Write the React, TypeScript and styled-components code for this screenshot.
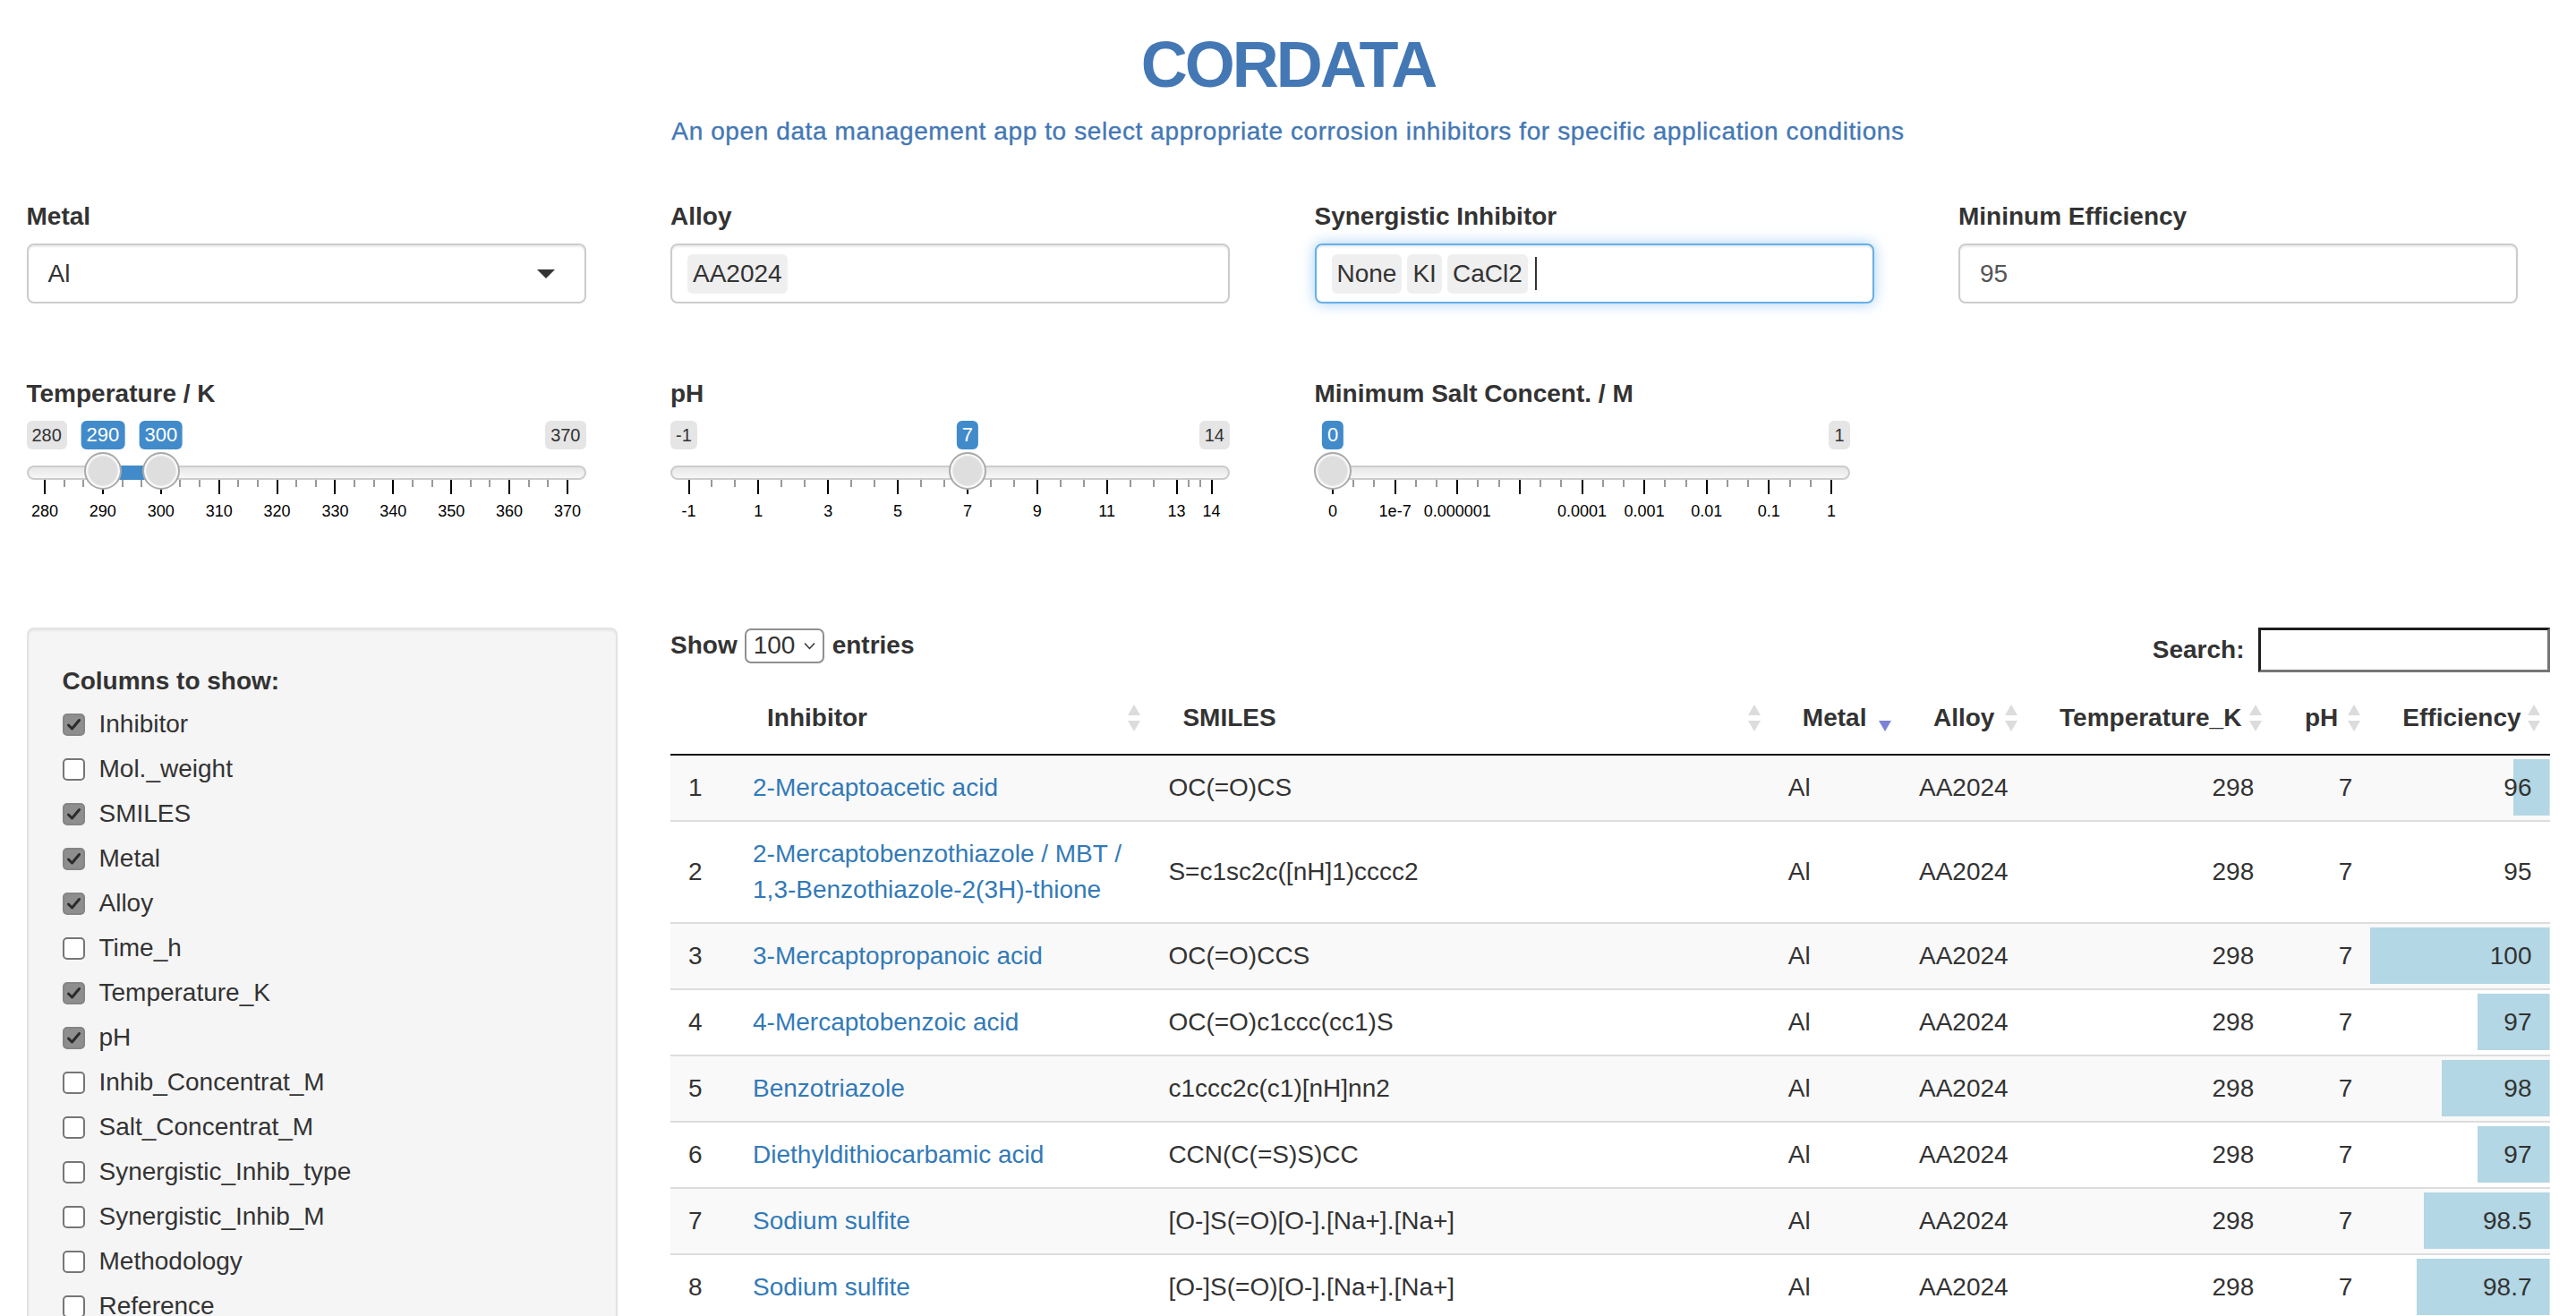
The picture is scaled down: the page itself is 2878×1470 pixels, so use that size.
import React from 'react';
import styled, { createGlobalStyle } from 'styled-components';

const TITLE_BLUE = '#4478b4';
const PAD = 20.5;

const GlobalStyle = createGlobalStyle`
  *, *::before, *::after { box-sizing: border-box; }
  html, body { margin: 0; padding: 0; background: #ffffff; }
  body {
    font-family: 'Liberation Sans', Arial, Helvetica, sans-serif;
    font-size: 28px;
    line-height: 40px;
    color: #333333;
  }
`;

const Page = styled.div`
  width: 100%;
  padding-bottom: 40px;
`;

const Header = styled.header`
  text-align: center;
  padding-top: 33px;
`;

const Title = styled.h1`
  margin: 0;
  font-size: 72px;
  line-height: 79px;
  font-weight: 700;
  letter-spacing: -3px;
  color: ${TITLE_BLUE};
`;

const Subtitle = styled.p`
  margin: 15px 0 0;
  font-size: 28px;
  line-height: 40px;
  letter-spacing: 0.6px;
  color: ${TITLE_BLUE};
  -webkit-text-stroke: 0.35px ${TITLE_BLUE};
`;

const FourCols = styled.div<{ $top: number }>`
  display: grid;
  grid-template-columns: repeat(4, 1fr);
  margin-top: ${({ $top }) => $top}px;
`;

const Col = styled.div`
  padding: 0 29.5px;
  min-width: 0;
`;

const FieldLabel = styled.label`
  display: block;
  font-weight: 700;
  margin-bottom: 10px;
`;

const InputBox = styled.div<{ $focused?: boolean; $chips?: boolean }>`
  display: flex;
  align-items: center;
  gap: 6px;
  width: 625px;
  max-width: 100%;
  height: 67px;
  padding: 0 22px 0 ${({ $chips }) => ($chips ? 17 : 22)}px;
  border: 2px solid ${({ $focused }) => ($focused ? '#66afe9' : '#cccccc')};
  border-radius: 8px;
  background: #ffffff;
  box-shadow: ${({ $focused }) =>
    $focused
      ? 'inset 0 2px 2px rgba(0,0,0,0.075), 0 0 16px rgba(102,175,233,0.6)'
      : 'inset 0 2px 2px rgba(0,0,0,0.075)'};
`;

const InputText = styled.span<{ $muted?: boolean }>`
  color: ${({ $muted }) => ($muted ? '#555555' : '#333333')};
`;

const Chip = styled.span`
  display: inline-flex;
  align-items: center;
  height: 44px;
  padding: 0 6px;
  border-radius: 6px;
  background: #efefef;
  color: #333333;
`;

const Caret = styled.span`
  margin-left: auto;
  margin-right: 11px;
  width: 0;
  height: 0;
  border-left: 10.5px solid transparent;
  border-right: 10.5px solid transparent;
  border-top: 10px solid #333333;
`;

const TextCursor = styled.span`
  width: 2px;
  height: 37px;
  margin-left: 2px;
  background: #333333;
`;

/* ---------- slider ---------- */

const SliderBox = styled.div<{ $w: number }>`
  position: relative;
  width: ${({ $w }) => $w}px;
  height: 115px;
`;

const SliderLine = styled.div`
  position: absolute;
  left: 0;
  right: 0;
  top: 50px;
  height: 16px;
  border: 2px solid #cccccc;
  border-radius: 16px;
  background: linear-gradient(to bottom, #dedede -50%, #ffffff 150%);
`;

const SliderBar = styled.div`
  position: absolute;
  top: 50px;
  height: 16px;
  background: #428bca;
`;

const GridPol = styled.span<{ $big: boolean }>`
  position: absolute;
  top: 66px;
  width: 2px;
  height: ${({ $big }) => ($big ? 16 : 8)}px;
  background: ${({ $big }) => ($big ? '#000000' : '#999999')};
`;

const GridText = styled.span`
  position: absolute;
  top: 91px;
  transform: translateX(-50%);
  font-size: 18px;
  line-height: 20px;
  color: #000000;
  white-space: nowrap;
`;

const Handle = styled.span`
  position: absolute;
  top: 35px;
  width: 42px;
  height: 42px;
  margin-left: -21px;
  border-radius: 50%;
  border: 2px solid #ababab;
  background: #dedede;
  box-shadow: inset 0 0 2px 2px #ffffff;
`;

const EdgeTag = styled.span<{ $side: 'left' | 'right' }>`
  position: absolute;
  top: 0;
  ${({ $side }) => $side}: 0;
  height: 32px;
  padding: 0 6px;
  font-size: 20px;
  line-height: 32px;
  border-radius: 6px;
  background: rgba(0, 0, 0, 0.1);
  color: #333333;
`;

const ValueTag = styled.span`
  position: absolute;
  top: 0;
  transform: translateX(-50%);
  height: 32px;
  padding: 0 6px;
  font-size: 22px;
  line-height: 32px;
  border-radius: 6px;
  background: #428bca;
  color: #ffffff;
  white-space: nowrap;
`;

type Tick = { at: number; label?: string };
type Knob = { at: number; label: string };

interface RangeSliderProps {
  width: number;
  minLabel: string;
  maxLabel: string;
  showMin?: boolean;
  knobs: Knob[];
  majors: Tick[];
}

function RangeSlider({ width, minLabel, maxLabel, showMin = true, knobs, majors }: RangeSliderProps) {
  const px = (at: number) => PAD + at * (width - 2 * PAD);

  const minors: number[] = [];
  majors.forEach((m, i) => {
    const next = majors[i + 1];
    if (!next) return;
    const step = (next.at - m.at) / 3;
    minors.push(m.at + step, m.at + 2 * step);
  });

  return (
    <SliderBox $w={width}>
      <SliderLine />
      {knobs.length === 2 && (
        <SliderBar style={{ left: px(knobs[0].at), width: px(knobs[1].at) - px(knobs[0].at) }} />
      )}
      {minors.map((at, i) => (
        <GridPol key={`s${i}`} $big={false} style={{ left: px(at) - 1 }} />
      ))}
      {majors.map((m, i) => (
        <GridPol key={`b${i}`} $big style={{ left: px(m.at) - 1 }} />
      ))}
      {majors.map((m, i) =>
        m.label ? (
          <GridText key={`t${i}`} style={{ left: px(m.at) }}>
            {m.label}
          </GridText>
        ) : null,
      )}
      {showMin && <EdgeTag $side='left'>{minLabel}</EdgeTag>}
      <EdgeTag $side='right'>{maxLabel}</EdgeTag>
      {knobs.map((k) => (
        <ValueTag key={`v${k.label}`} style={{ left: px(k.at) }}>
          {k.label}
        </ValueTag>
      ))}
      {knobs.map((k) => (
        <Handle key={`h${k.label}`} style={{ left: px(k.at) }} />
      ))}
    </SliderBox>
  );
}

const tempMajors: Tick[] = Array.from({ length: 10 }, (_, i) => ({
  at: i / 9,
  label: String(280 + i * 10),
}));

const phMajors: Tick[] = [-1, 1, 3, 5, 7, 9, 11, 13, 14].map((v) => ({
  at: (v + 1) / 15,
  label: String(v),
}));

const saltMajors: Tick[] = ['0', '1e-7', '0.000001', '', '0.0001', '0.001', '0.01', '0.1', '1'].map(
  (label, i) => ({ at: i / 8, label }),
);

/* ---------- sidebar ---------- */

const BottomRow = styled.div`
  display: grid;
  grid-template-columns: 1fr 3fr;
  align-items: start;
  margin-top: 116px;
`;

const Well = styled.div`
  padding: 38px;
  border: 2px solid #e3e3e3;
  border-radius: 8px;
  background: #f5f5f5;
  box-shadow: inset 0 2px 2px rgba(0, 0, 0, 0.05);
`;

const WellTitle = styled.div`
  font-weight: 700;
`;

const CheckList = styled.div`
  display: flex;
  flex-direction: column;
  gap: 10px;
  margin-top: 8px;
`;

const CheckRow = styled.label`
  display: flex;
  align-items: center;
  gap: 16px;
  height: 40px;
`;

const CheckBox = styled.span<{ $checked: boolean }>`
  display: inline-flex;
  align-items: center;
  justify-content: center;
  width: 25px;
  height: 25px;
  border-radius: 5px;
  border: 2px solid ${({ $checked }) => ($checked ? '#858585' : '#767676')};
  background: ${({ $checked }) => ($checked ? '#8e8e8e' : '#ffffff')};
`;

const columnsToShow: { name: string; on: boolean }[] = [
  { name: 'Inhibitor', on: true },
  { name: 'Mol._weight', on: false },
  { name: 'SMILES', on: true },
  { name: 'Metal', on: true },
  { name: 'Alloy', on: true },
  { name: 'Time_h', on: false },
  { name: 'Temperature_K', on: true },
  { name: 'pH', on: true },
  { name: 'Inhib_Concentrat_M', on: false },
  { name: 'Salt_Concentrat_M', on: false },
  { name: 'Synergistic_Inhib_type', on: false },
  { name: 'Synergistic_Inhib_M', on: false },
  { name: 'Methodology', on: false },
  { name: 'Reference', on: false },
];

/* ---------- table ---------- */

const ControlsRow = styled.div`
  display: flex;
  justify-content: space-between;
  align-items: flex-start;
`;

const LengthControl = styled.div`
  display: flex;
  align-items: center;
  height: 40px;
  font-weight: 700;
`;

const PageSelect = styled.span`
  display: inline-flex;
  align-items: center;
  justify-content: space-between;
  width: 89px;
  height: 39px;
  margin: 0 9px 0 8px;
  padding: 0 8px 0 8px;
  border: 2px solid #8f8f8f;
  border-radius: 7px;
  font-weight: 400;
  background: #ffffff;
`;

const SearchControl = styled.div`
  display: flex;
  align-items: center;
  gap: 15px;
  height: 50px;
  font-weight: 700;
`;

const SearchInput = styled.span`
  display: block;
  width: 326px;
  height: 50px;
  border-style: solid;
  border-width: 3px;
  border-color: #1e1e1e #767676 #767676 #1e1e1e;
  background: #ffffff;
`;

const Table = styled.table`
  width: 100%;
  margin-top: 11px;
  table-layout: fixed;
  border-collapse: separate;
  border-spacing: 0;
`;

const Th = styled.th<{ $align: 'left' | 'right' }>`
  position: relative;
  padding: 20px 36px;
  text-align: ${({ $align }) => $align};
  font-weight: 700;
  border-bottom: 2px solid #111111;
  white-space: nowrap;
`;

const SortMark = styled.svg`
  position: absolute;
  right: 9px;
  top: 50%;
  transform: translateY(-50%);
`;

const Tr = styled.tr<{ $odd: boolean }>`
  background: ${({ $odd }) => ($odd ? '#f9f9f9' : '#ffffff')};
`;

const Td = styled.td<{ $align: 'left' | 'right'; $first: boolean }>`
  padding: 16px 20px;
  text-align: ${({ $align }) => $align};
  vertical-align: middle;
  border-top: ${({ $first }) => ($first ? 'none' : '2px solid #dddddd')};
`;

const BarCell = styled(Td)`
  background-repeat: no-repeat;
  background-size: 100% 88%;
  background-position: center;
`;

const NameLink = styled.a`
  color: #337ab7;
  text-decoration: none;
`;

const NameLine = styled.span`
  display: block;
  white-space: nowrap;
`;

type Align = 'left' | 'right';
type Sort = 'none' | 'both' | 'desc';

const columns: { label: string; width: number; align: Align; sort: Sort }[] = [
  { label: '', width: 72, align: 'left', sort: 'none' },
  { label: 'Inhibitor', width: 464, align: 'left', sort: 'both' },
  { label: 'SMILES', width: 692, align: 'left', sort: 'both' },
  { label: 'Metal', width: 146, align: 'left', sort: 'desc' },
  { label: 'Alloy', width: 141, align: 'left', sort: 'both' },
  { label: 'Temperature_K', width: 273, align: 'right', sort: 'both' },
  { label: 'pH', width: 110, align: 'right', sort: 'both' },
  { label: 'Efficiency', width: 200, align: 'right', sort: 'both' },
];

interface Row {
  name: string[];
  smiles: string;
  eff: number;
}

const rows: Row[] = [
  { name: ['2-Mercaptoacetic acid'], smiles: 'OC(=O)CS', eff: 96 },
  {
    name: ['2-Mercaptobenzothiazole / MBT /', '1,3-Benzothiazole-2(3H)-thione'],
    smiles: 'S=c1sc2c([nH]1)cccc2',
    eff: 95,
  },
  { name: ['3-Mercaptopropanoic acid'], smiles: 'OC(=O)CCS', eff: 100 },
  { name: ['4-Mercaptobenzoic acid'], smiles: 'OC(=O)c1ccc(cc1)S', eff: 97 },
  { name: ['Benzotriazole'], smiles: 'c1ccc2c(c1)[nH]nn2', eff: 98 },
  { name: ['Diethyldithiocarbamic acid'], smiles: 'CCN(C(=S)S)CC', eff: 97 },
  { name: ['Sodium sulfite'], smiles: '[O-]S(=O)[O-].[Na+].[Na+]', eff: 98.5 },
  { name: ['Sodium sulfite'], smiles: '[O-]S(=O)[O-].[Na+].[Na+]', eff: 98.7 },
];

function SortIcon({ dir }: { dir: Sort }) {
  if (dir === 'none') return null;
  return (
    <SortMark width={18} height={32} viewBox='0 0 18 32'>
      {dir === 'both' && <polygon points='9,1 16,13 2,13' fill='#dcdcdc' />}
      <polygon points='2,19 16,19 9,31' fill={dir === 'desc' ? '#7b82d8' : '#dcdcdc'} />
    </SortMark>
  );
}

function barStyle(eff: number): React.CSSProperties {
  const share = Math.max(0, Math.min(1, (eff - 95) / 5));
  const stop = (1 - share) * 100;
  return {
    backgroundImage: `linear-gradient(90deg, transparent ${stop}%, #b3d7e4 ${stop}%)`,
  };
}

export default function App() {
  return (
    <Page>
      <GlobalStyle />
      <Header>
        <Title>CORDATA</Title>
        <Subtitle>
          An open data management app to select appropriate corrosion inhibitors for specific application conditions
        </Subtitle>
      </Header>

      <FourCols $top={55}>
        <Col>
          <FieldLabel>Metal</FieldLabel>
          <InputBox>
            <InputText>Al</InputText>
            <Caret />
          </InputBox>
        </Col>
        <Col>
          <FieldLabel>Alloy</FieldLabel>
          <InputBox $chips>
            <Chip>AA2024</Chip>
          </InputBox>
        </Col>
        <Col>
          <FieldLabel>Synergistic Inhibitor</FieldLabel>
          <InputBox $chips $focused>
            <Chip>None</Chip>
            <Chip>KI</Chip>
            <Chip>CaCl2</Chip>
            <TextCursor />
          </InputBox>
        </Col>
        <Col>
          <FieldLabel>Mininum Efficiency</FieldLabel>
          <InputBox>
            <InputText $muted>95</InputText>
          </InputBox>
        </Col>
      </FourCols>

      <FourCols $top={81}>
        <Col>
          <FieldLabel>Temperature / K</FieldLabel>
          <RangeSlider
            width={625}
            minLabel='280'
            maxLabel='370'
            knobs={[
              { at: 1 / 9, label: '290' },
              { at: 2 / 9, label: '300' },
            ]}
            majors={tempMajors}
          />
        </Col>
        <Col>
          <FieldLabel>pH</FieldLabel>
          <RangeSlider width={625} minLabel='-1' maxLabel='14' knobs={[{ at: 8 / 15, label: '7' }]} majors={phMajors} />
        </Col>
        <Col>
          <FieldLabel>Minimum Salt Concent. / M</FieldLabel>
          <RangeSlider
            width={598}
            minLabel='0'
            maxLabel='1'
            showMin={false}
            knobs={[{ at: 0, label: '0' }]}
            majors={saltMajors}
          />
        </Col>
        <Col />
      </FourCols>

      <BottomRow>
        <Col>
          <Well>
            <WellTitle>Columns to show:</WellTitle>
            <CheckList>
              {columnsToShow.map((c) => (
                <CheckRow key={c.name}>
                  <CheckBox $checked={c.on}>
                    {c.on && (
                      <svg width={17} height={17} viewBox='0 0 17 17'>
                        <path d='M2.5 9 L6.5 13 L14.5 3.5' fill='none' stroke='#2b2b2b' strokeWidth={3} strokeLinecap='round' strokeLinejoin='round' />
                      </svg>
                    )}
                  </CheckBox>
                  <span>{c.name}</span>
                </CheckRow>
              ))}
            </CheckList>
          </Well>
        </Col>
        <Col>
          <ControlsRow>
            <LengthControl>
              Show
              <PageSelect>
                100
                <svg width={13} height={9} viewBox='0 0 13 9'>
                  <path d='M1 1.5 L6.5 7.5 L12 1.5' fill='none' stroke='#333' strokeWidth={1.5} />
                </svg>
              </PageSelect>
              entries
            </LengthControl>
            <SearchControl>
              Search:
              <SearchInput />
            </SearchControl>
          </ControlsRow>

          <Table>
            <colgroup>
              {columns.map((c, i) => (
                <col key={i} style={{ width: c.width }} />
              ))}
            </colgroup>
            <thead>
              <tr>
                {columns.map((c, i) => (
                  <Th key={i} $align={c.align}>
                    {c.label}
                    <SortIcon dir={c.sort} />
                  </Th>
                ))}
              </tr>
            </thead>
            <tbody>
              {rows.map((r, i) => {
                const first = i === 0;
                return (
                  <Tr key={i} $odd={i % 2 === 0}>
                    <Td $align='left' $first={first}>
                      {i + 1}
                    </Td>
                    <Td $align='left' $first={first}>
                      <NameLink href='#'>
                        {r.name.map((line) => (
                          <NameLine key={line}>{line}</NameLine>
                        ))}
                      </NameLink>
                    </Td>
                    <Td $align='left' $first={first}>
                      {r.smiles}
                    </Td>
                    <Td $align='left' $first={first}>
                      Al
                    </Td>
                    <Td $align='left' $first={first}>
                      AA2024
                    </Td>
                    <Td $align='right' $first={first}>
                      298
                    </Td>
                    <Td $align='right' $first={first}>
                      7
                    </Td>
                    <BarCell $align='right' $first={first} style={barStyle(r.eff)}>
                      {r.eff}
                    </BarCell>
                  </Tr>
                );
              })}
            </tbody>
          </Table>
        </Col>
      </BottomRow>
    </Page>
  );
}
